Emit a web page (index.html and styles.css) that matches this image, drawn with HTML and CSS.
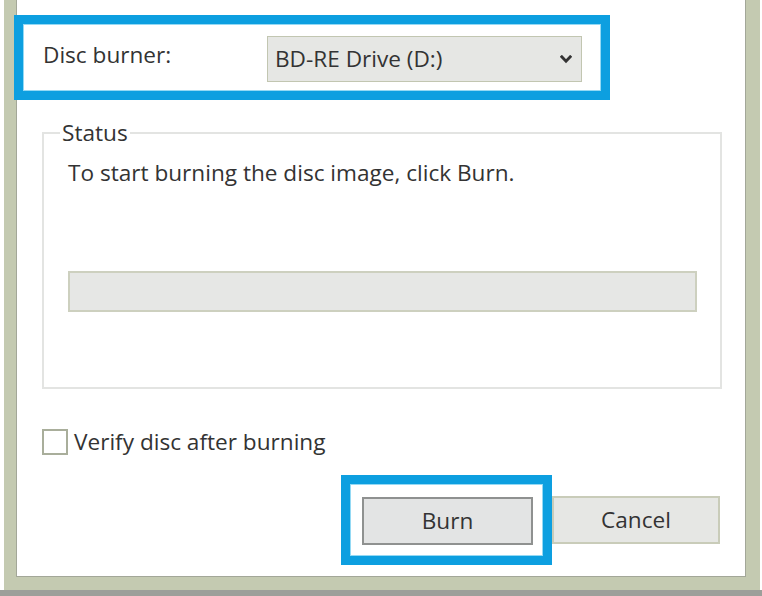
FILE: index.html
```html
<!DOCTYPE html>
<html lang="en">
<head>
<meta charset="utf-8">
<title>Burn Disc Image</title>
<link rel="stylesheet" href="styles.css">
</head>
<body>
<div class="screen">
  <div class="window">
    <div class="content">
      <div class="highlight burner-row">
        <span class="label">Disc burner:</span>
        <div class="select">
          <span class="select-text">BD-RE Drive (D:)</span>
          <svg class="chevron" width="12" height="9" viewBox="0 0 12 9" aria-hidden="true">
            <path d="M1.8 1.8 L6 6.3 L10.2 1.8" fill="none" stroke="#333333" stroke-width="2.8" stroke-linecap="square"/>
          </svg>
        </div>
      </div>

      <fieldset class="group">
        <legend class="legend">Status</legend>
        <p class="status-text">To start burning the disc image, click Burn.</p>
        <div class="progress"></div>
      </fieldset>

      <label class="check-row">
        <span class="checkbox"></span>
        <span class="check-label">Verify disc after burning</span>
      </label>

      <div class="buttons">
        <div class="highlight burn-wrap">
          <button class="btn btn-default">Burn</button>
        </div>
        <button class="btn">Cancel</button>
      </div>
    </div>
  </div>
  <div class="bottom-strip"></div>
</div>
</body>
</html>
```

FILE: styles.css
```css
* { box-sizing: border-box; }

html, body {
  margin: 0;
  padding: 0;
  background: #ffffff;
}

body {
  font-family: "Open Sans", "Noto Sans", sans-serif;
  font-size: 22.6px;
  line-height: 30px;
  color: #333333;
}

.screen {
  width: 762px;
  height: 596px;
  display: flex;
  flex-direction: column;
  overflow: hidden;
}

.window {
  flex: 1;
  margin: 0 2px 0 4px;
  padding: 0 14px 13px 12px;
  background: #c4cab1;
  display: flex;
}

.content {
  flex: 1;
  background: #ffffff;
  border: 1px solid #a3a798;
  border-top: none;
  padding: 15px 0 10px 0;
  display: flex;
  flex-direction: column;
}

.bottom-strip {
  height: 6px;
  background: #9d9f9a;
}

/* blue annotation frames */
.highlight {
  border: 9px solid #0d9fe0;
  box-shadow: inset 0 0 0 1px #94d9f4;
  background: #ffffff;
}

.burner-row {
  width: 596px;
  margin-left: -3px;
  padding: 12px 19px 9px 20px;
  display: grid;
  grid-template-columns: 224px 1fr;
  align-items: start;
}

.label {
  margin-top: 4px;
}

.select {
  height: 46px;
  background: #e6e7e4;
  border: 1px solid #c2c6b1;
  display: flex;
  align-items: center;
  justify-content: space-between;
  padding: 0 9px 0 7px;
}

.chevron {
  display: block;
  margin-top: 1px;
}

/* status group */
.group {
  margin: 18px 23px 0 25px;
  border: 2px solid #e3e4e2;
  padding: 10px 23px 75px 24px;
  min-width: 0;
}

.legend {
  padding: 0 2px;
  margin-left: -8px;
  line-height: 30px;
}

.status-text {
  margin: 0;
}

.progress {
  margin-top: 83px;
  height: 41px;
  background: #e6e7e5;
  border: 2px solid #cdd0bf;
}

/* checkbox */
.check-row {
  margin: 38px 0 0 25px;
  display: flex;
  align-items: center;
  gap: 6px;
  height: 30px;
}

.checkbox {
  width: 26px;
  height: 26px;
  border: 2px solid #a9ae9b;
  background: #ffffff;
}

/* buttons */
.buttons {
  margin-top: 18px;
  padding-right: 25px;
  display: flex;
  justify-content: flex-end;
  align-items: center;
}

.burn-wrap {
  padding: 13px 10px 11px 12px;
}

.btn {
  font: inherit;
  color: #333333;
  width: 168px;
  height: 48px;
  padding: 0;
  background: #e6e7e4;
  border: 2px solid #c9ccb9;
  border-radius: 0;
  display: flex;
  align-items: center;
  justify-content: center;
}

.btn-default {
  width: 171px;
  background: #e3e4e4;
  border-color: #8f9190;
}
```
